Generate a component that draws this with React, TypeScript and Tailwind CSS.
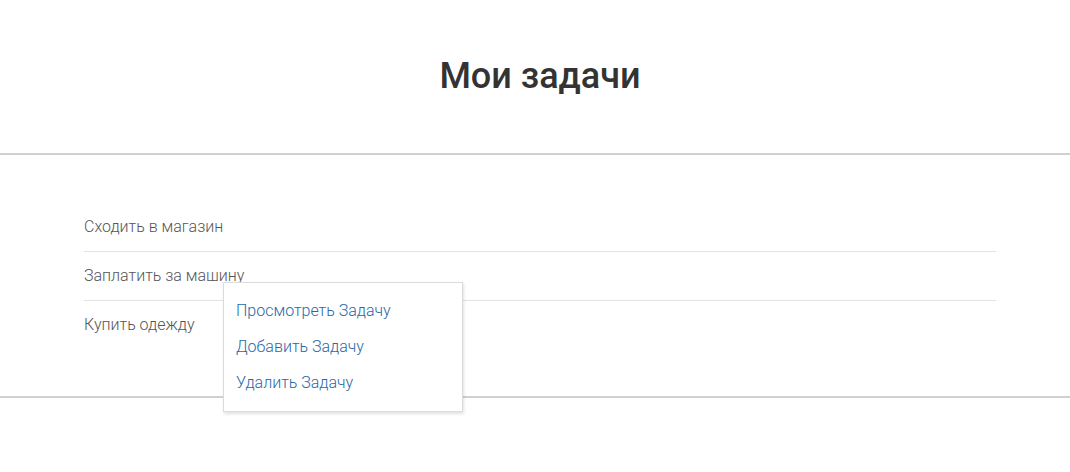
import React from 'react';

const TASKS = ['Сходить в магазин', 'Заплатить за машину', 'Купить одежду'];
const ACTIONS = ['Просмотреть Задачу', 'Добавить Задачу', 'Удалить Задачу'];

const App = () => {
    return (
        <div className="min-h-[472px] w-full bg-white font-['Roboto',sans-serif]">
            <header className="flex h-[153px] items-center justify-center pb-[2px] pl-[10px]">
                <h1 className="text-[36px] font-medium leading-none text-[#333]">Мои задачи</h1>
            </header>
            <div className="border-t-2 border-[#d0d0d0]"></div>
            <main className="pl-[84px] pr-[74px] pt-[48px] pb-[46px]">
                <ul className="flex flex-col">
                    {TASKS.map((task, i) => (
                        <li
                            key={task}
                            className={`relative flex h-[49px] items-center text-[16px] font-light text-[#555] ${i < TASKS.length - 1 ? 'border-b border-[#e2e2e2]' : ''}`}
                        >
                            <span className="-mt-[1px]">{task}</span>
                            {i === 1 && (
                                <div className="absolute left-[139px] top-[30px] z-10 w-[240px] border border-[#dcdcdc] bg-white py-[10px] shadow-[1px_2px_3px_rgba(0,0,0,0.12)]">
                                    {ACTIONS.map(action => (
                                        <a
                                            key={action}
                                            href="#"
                                            className="flex h-[36px] items-center pl-[12px] text-[16px] font-light text-[#2868a8]"
                                        >
                                            {action}
                                        </a>
                                    ))}
                                </div>
                            )}
                        </li>
                    ))}
                </ul>
            </main>
            <div className="border-t-2 border-[#d0d0d0]"></div>
        </div>
    );
};

export default App;
